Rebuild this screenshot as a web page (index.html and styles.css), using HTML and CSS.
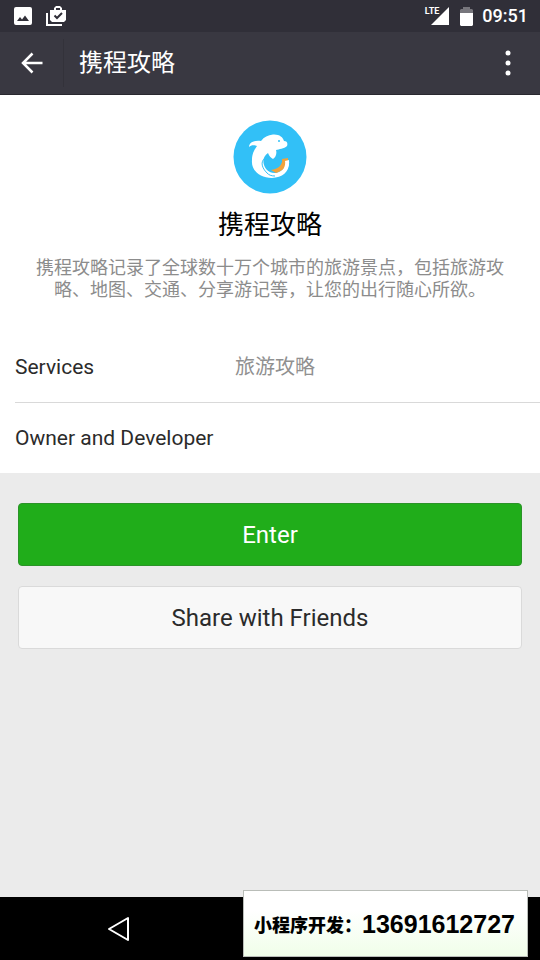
FILE: index.html
```html
<!DOCTYPE html>
<html lang="zh-CN">
<head>
<meta charset="utf-8">
<meta name="viewport" content="width=device-width, initial-scale=1">
<title>携程攻略</title>
<link rel="stylesheet" href="styles.css">
</head>
<body>
<div class="screen">
  <div class="status">
    <svg class="status-icon" width="18" height="18" viewBox="0 0 18 18" aria-hidden="true"><path fill="#fff" fill-rule="evenodd" d="M2 0H16A2 2 0 0 1 18 2V16A2 2 0 0 1 16 18H2A2 2 0 0 1 0 16V2A2 2 0 0 1 2 0ZM3 14H15L11 8.500L8 12.500L6 10Z"/></svg>
    <svg class="status-icon" width="20" height="20" viewBox="0 0 20 20" aria-hidden="true"><path fill="none" stroke="#fff" stroke-width="2" d="M1 7V19H16"/><path fill="#fff" fill-rule="evenodd" d="M4 4H8V2L10 0H14L16 2V4H20V14L18 16H6L4 14ZM10 4H14V2H10Z"/><path fill="none" stroke="#302f38" stroke-width="2" d="M8.500 9.500L11 12L16 7"/></svg>
    <span class="spacer"></span>
    <span class="signal">
      <span class="lte">LTE</span>
      <svg width="18" height="18" viewBox="0 0 18 18" aria-hidden="true"><path fill="#fff" d="M18 0V18H0Z"/></svg>
    </span>
    <svg class="battery" width="13" height="19" viewBox="0 0 13 19" aria-hidden="true"><path fill="#77767c" d="M3 0H10V2H12L13 3V7H0V3L1 2H3Z"/><path fill="#fff" d="M0 6H13V18L12 19H1L0 18Z"/></svg>
    <time class="clock">09:51</time>
  </div>

  <header class="bar">
    <button class="icon-button back" type="button" aria-label="Back"><svg width="22" height="22" viewBox="0 0 22 22" aria-hidden="true"><path fill="none" stroke="#fff" stroke-width="2.500" d="M21.500 11H2M11.500 1.500L2 11L11.500 20.500"/></svg></button>
    <span class="bar-title">携程攻略</span>
    <button class="icon-button more" type="button" aria-label="More"><svg width="6" height="26" viewBox="0 0 6 26" aria-hidden="true"><g fill="#fff"><circle cx="3" cy="3" r="2.500"/><circle cx="3" cy="13" r="2.500"/><circle cx="3" cy="23" r="2.500"/></g></svg></button>
  </header>

  <main class="content">
    <section class="profile">
      <svg class="logo" width="74" height="74" viewBox="0 0 74 74" role="img" aria-label="Dolphin">
        <circle cx="37" cy="37" r="36.500" fill="#32c0f7"/>
        <path fill="#fff" d="M16 27C16 23 20 20 28 21C31 17 35 15 40 14.500C46 14 50 17 51 21C54 21 55 23 54 26C51 29 46 29 43 30C44 33 43 37 40 39C38 38 36 36 35 33C29 37 29 44 34 50C39 55 48 54 52 46L52 42L56 41C57 51 50 58 39 58C26 58 18 50 19 40C19 33 22 29 24 26C21 25 18 25 16 27Z"/>
        <path fill="none" stroke="#32c0f7" stroke-width="1" d="M32 38C27 42 29 48 34 53C36 55 38 56 42 56"/>
        <path fill="#f0a33c" d="M49 39L55 38C56 45 50 51 43 53L38 50C45 49 50 45 49 39Z"/>
        <path fill="#fff" d="M52 41L56 40C57 47 52 54 45 55C50 51 53 46 52 41Z"/>
        <circle cx="46" cy="21" r="1" fill="#32c0f7"/>
      </svg>
      <h1 class="name">携程攻略</h1>
      <p class="about">携程攻略记录了全球数十万个城市的旅游景点，包括旅游攻略、地图、交通、分享游记等，让您的出行随心所欲。</p>
    </section>
    <dl class="facts">
      <div class="fact"><dt>Services</dt><dd>旅游攻略</dd></div>
      <div class="fact"><dt>Owner and Developer</dt><dd></dd></div>
    </dl>
  </main>

  <div class="actions">
    <button class="action primary" type="button">Enter</button>
    <button class="action" type="button">Share with Friends</button>
  </div>

  <nav class="navbar">
    <button class="icon-button" type="button" aria-label="Navigate back"><svg width="24" height="26" viewBox="0 0 24 26" aria-hidden="true"><path fill="none" stroke="#fff" stroke-width="2" stroke-linejoin="round" d="M22 2V24L3 13Z"/></svg></button>
  </nav>
  <aside class="contact"><span>小程序开发：</span><strong>13691612727</strong></aside>
</div>
</body>
</html>
```
FILE: styles.css
```css
* { box-sizing: border-box; }
body {
  margin: 0;
  background: #ebebeb;
  color: #2b2b2b;
  font-family: Roboto, "Noto Sans CJK SC", sans-serif;
}
button { font: inherit; }
svg { display: block; flex: none; }
.screen {
  position: relative;
  display: flex;
  flex-direction: column;
  min-height: 100vh;
}
.status {
  display: flex;
  align-items: center;
  height: 32px;
  padding: 0 12px 0 14px;
  background: #302f38;
  color: #fff;
}
.status-icon { margin-right: 14px; }
.spacer { flex: 1; }
.signal { position: relative; padding-left: 5px; }
.lte {
  position: absolute;
  right: 10px;
  top: -2px;
  font: bold 9px/12px "Liberation Sans Narrow", Roboto, sans-serif;
}
.battery { margin: 0 9px 0 11px; }
.clock { font-size: 18px; font-weight: 500; line-height: 32px; }
.bar {
  display: flex;
  align-items: center;
  height: 63px;
  background: #393841;
  border-bottom: 1px solid #29282f;
  color: #fff;
}
.icon-button {
  display: flex;
  align-items: center;
  justify-content: center;
  height: 48px;
  padding: 0;
  border: 0;
  background: none;
}
.back { width: 64px; border-right: 1px solid #33323a; }
.bar-title {
  flex: 1;
  padding-left: 15px;
  font-size: 24px;
  line-height: 36px;
}
.more { width: 64px; }
.content { background: #fff; }
.profile {
  display: flex;
  flex-direction: column;
  align-items: center;
  padding: 25px 28px 30px;
  text-align: center;
}
.name {
  margin: 13px 0 14px;
  color: #000;
  font-size: 26px;
  font-weight: 400;
  line-height: 36px;
}
.about {
  margin: 0;
  color: #8c8c8c;
  font-size: 18px;
  line-height: 22px;
}
.facts { margin: 0; padding-left: 15px; }
.fact {
  display: flex;
  align-items: center;
  height: 71px;
  font-size: 21px;
  line-height: 30px;
}
.fact + .fact { border-top: 1px solid #d9d9d9; }
dt { min-width: 220px; }
dd { margin: 0; color: #909090; font-size: 20px; }
.actions {
  display: flex;
  flex: 1;
  flex-direction: column;
  gap: 20px;
  padding: 30px 18px;
}
.action {
  height: 63px;
  border: 1px solid #dadada;
  border-radius: 4px;
  background: #f8f8f8;
  color: #2b2b2b;
  font-size: 24px;
}
.primary {
  border-color: #2b9328;
  background: #20ad1a;
  color: #fff;
}
.navbar {
  display: flex;
  align-items: center;
  height: 63px;
  padding-left: 106px;
  background: #000;
}
.contact {
  position: absolute;
  right: 12px;
  bottom: 3px;
  display: flex;
  align-items: center;
  height: 67px;
  padding: 0 12px 0 10px;
  border: 1px solid #b9bdb8;
  background: linear-gradient(#fff 30%, #f0fee9);
  color: #000;
  font: 900 18px/30px "Noto Sans CJK SC", sans-serif;
}
.contact strong { font: bold 25px/30px "Liberation Sans", sans-serif; }
```
